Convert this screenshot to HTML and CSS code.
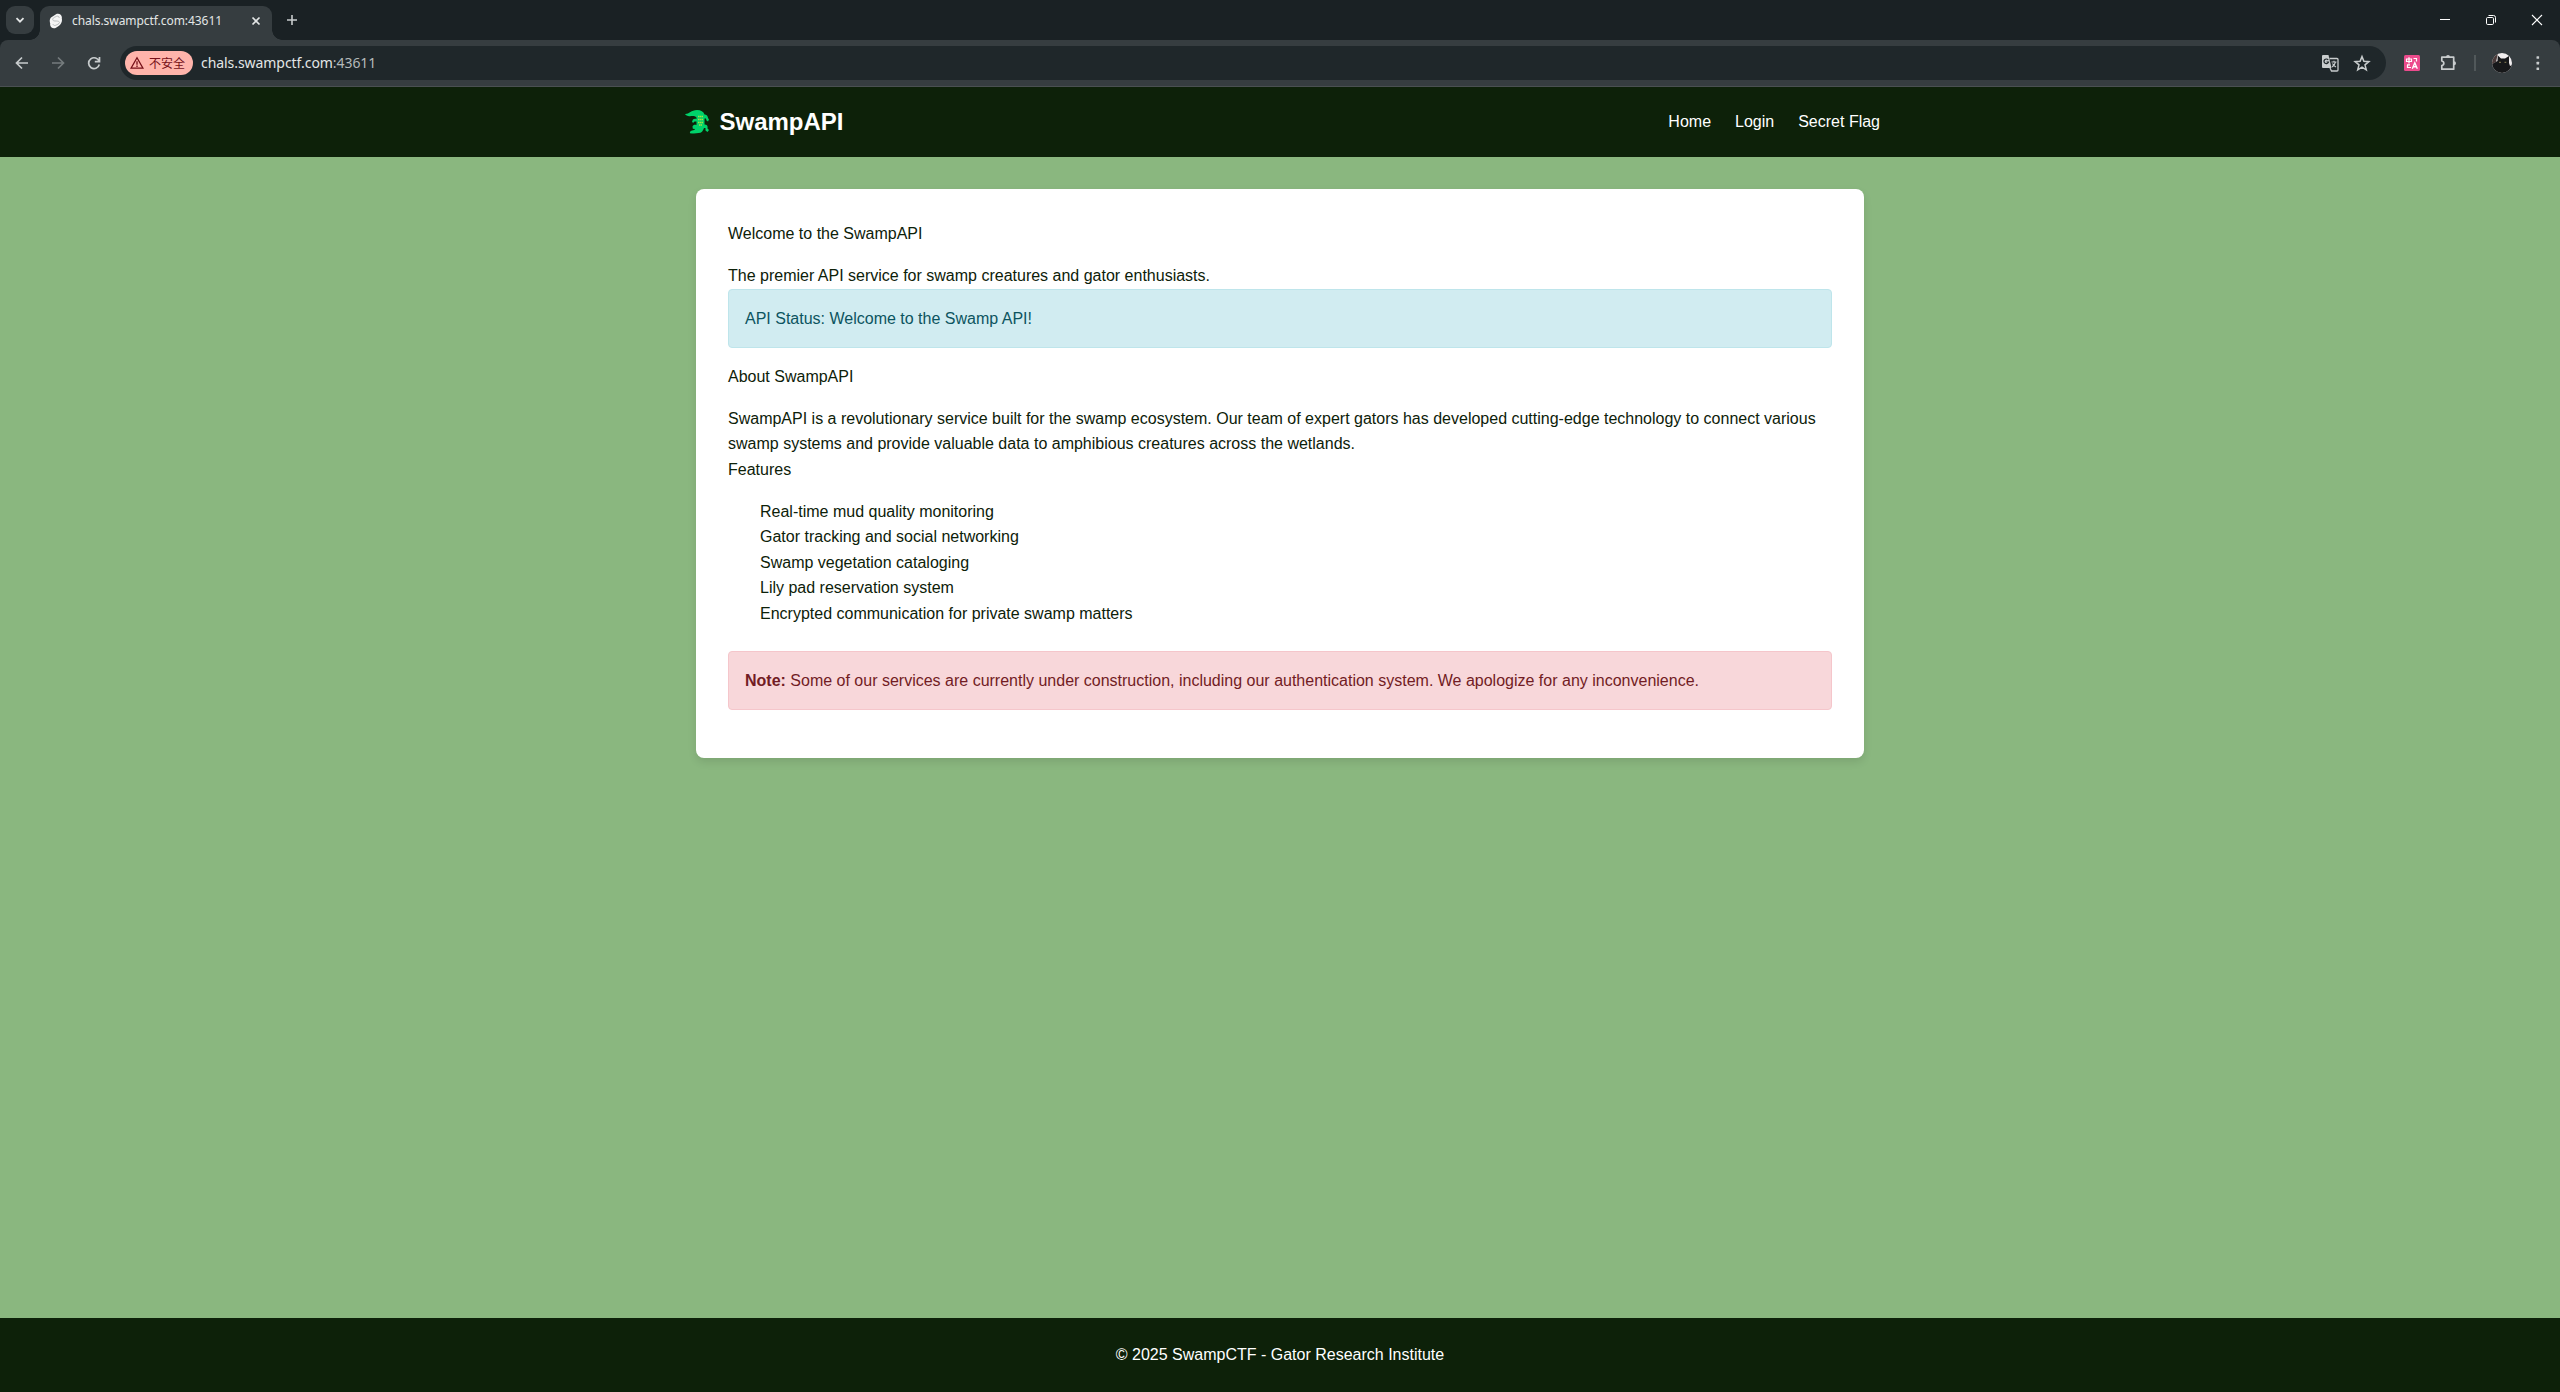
FILE: index.html
```html
<!DOCTYPE html>
<html lang="en">
<head>
<meta charset="utf-8">
<title>SwampAPI</title>
<link rel="stylesheet" href="styles.css">
</head>
<body>
<div class="browser">
  <div class="tabstrip">
    <div class="tab-search"><svg width="28" height="28" viewBox="0 0 28 28"><path d="M10.500 12.200l3.500 3.500 3.500-3.500" fill="none" stroke="#e3e6e6" stroke-width="1.800"/></svg></div>
    <div class="tab">
      <svg class="favicon" width="16" height="16" viewBox="0 0 16 16"><path d="M3 4.500L8 1.200C11 -.3 14.500 2 13.800 5.500C14.200 7 14 9 13 10.500C12.500 12 10 13.300 8 14.700C5 16.300 1.500 14 2.200 10.500C1.500 8.500 1.500 6.200 3 4.500Z" fill="#f5f5f5"/><path d="M5 7.200C4 5.500 5.500 4.800 8.500 3.300C10.500 2.600 11.500 4 11 5M5 11C5.500 13.400 8 12.600 11 10.500C12.500 8.500 10 8 8 8C6.500 8 5.300 8 5 7.200" fill="none" stroke="#b9bdbd" stroke-width="1"/></svg>
      <span class="tab-title">chals.swampctf.com:43611</span>
      <svg class="tab-close" width="16" height="16" viewBox="0 0 16 16"><path d="M4.500 4.500l7 7M11.500 4.500l-7 7" stroke="#e3e6e6" stroke-width="1.700"/></svg>
    </div>
    <svg class="new-tab" width="20" height="20" viewBox="0 0 20 20"><path d="M10 5v10M5 10h10" stroke="#c8cccd" stroke-width="1.600"/></svg>
    <div class="window-buttons">
      <svg width="46" height="40" viewBox="0 0 46 40"><path d="M18 19.500h10" stroke="#fff"/></svg>
      <svg width="46" height="40" viewBox="0 0 46 40"><rect x="18.500" y="17.500" width="7" height="7" rx="1.200" fill="none" stroke="#fff"/><path d="M20.500 15.500h5a2 2 0 0 1 2 2v5" fill="none" stroke="#fff"/></svg>
      <svg width="46" height="40" viewBox="0 0 46 40"><path d="M18 15l10 10M28 15l-10 10" stroke="#fff" stroke-width="1.100"/></svg>
    </div>
  </div>
  <div class="toolbar">
    <svg class="nav-icon" width="20" height="20" viewBox="0 0 20 20"><path d="M16 10H5M10 4.500L4.500 10l5.500 5.500" fill="none" stroke="#c8cccd" stroke-width="1.700"/></svg>
    <svg class="nav-icon" width="20" height="20" viewBox="0 0 20 20"><path d="M4 10h11M10 4.500L15.500 10 10 15.500" fill="none" stroke="#757b7d" stroke-width="1.700"/></svg>
    <svg class="nav-icon" width="20" height="20" viewBox="0 0 20 20"><path d="M15.200 8.500A5.400 5.400 0 1 0 15.300 11.500M15.500 4v4.700h-4.700" fill="none" stroke="#c8cccd" stroke-width="1.700"/></svg>
    <div class="omnibox">
      <div class="insecure"><svg width="14" height="14" viewBox="0 0 14 14"><path d="M7 1.800L13 12.200H1Z" fill="none" stroke="#750f18" stroke-width="1.300"/><path d="M7 5.200v3.500M7 9.600v1.300" stroke="#750f18" stroke-width="1.300"/></svg><span>不安全</span></div>
      <span class="url">chals.swampctf.com<span class="port">:43611</span></span>
      <svg class="translate" width="18" height="18" viewBox="0 0 18 18"><path d="M2 1h5.500l3 13H2a1 1 0 0 1-1-1V2a1 1 0 0 1 1-1Z" fill="#c8cccd"/><path d="M8.500 4.500H16a1 1 0 0 1 1 1V16a1 1 0 0 1-1 1h-5.500l-1.500-3" fill="none" stroke="#c8cccd" stroke-width="1.300"/><path d="M7.200 6A2.300 2.300 0 1 0 7.500 8H5.500" fill="none" stroke="#1f272a" stroke-width="1.200"/><path d="M10.500 8h5M13 6.800V8M14.500 8c-.5 2-1.500 3.500-3.500 5M11.500 9.500c.8 1.500 2 2.700 3.500 3.500" fill="none" stroke="#c8cccd" stroke-width="1.100"/></svg>
      <svg class="star" width="18" height="18" viewBox="0 0 18 18"><path d="M9 2.600l1.900 4.700 5 .4-3.900 3.200 1.300 5L9 13.200l-4.300 2.700 1.300-5-3.900-3.200 5-.4Z" fill="none" stroke="#c8cccd" stroke-width="1.500"/></svg>
    </div>
    <div class="actions">
      <svg width="16" height="16" viewBox="0 0 16 16"><rect width="16" height="16" rx="1.500" fill="#ec4b8c"/><path d="M2.500 4h5v2.500h-5ZM5 2.300v6.200M9.500 3.500H12.500V6.500M3.500 10v2.500h3.500M3 9.800h3" fill="none" stroke="#fff" stroke-width="1.200"/><path d="M8.300 13.700l2.500-6 2.500 6M9.300 11.800h3" fill="none" stroke="#fff" stroke-width="1.400"/></svg>
      <svg width="20" height="20" viewBox="0 0 20 20"><path d="M3.800 4.200H15.700V16.200H3.800V12.500C6.500 12 6.500 8.500 3.800 8Z" fill="none" stroke="#c8cccd" stroke-width="1.700" stroke-linejoin="round"/><path d="M8 4a2 2 0 0 1 4 0ZM16 8.300a2 2 0 0 1 0 4Z" fill="#c8cccd"/></svg>
      <span class="separator"></span>
      <svg width="20" height="20" viewBox="0 0 20 20"><defs><clipPath id="avatar"><circle cx="10" cy="10" r="10"/></clipPath></defs><g clip-path="url(#avatar)"><rect width="20" height="20" fill="#f1eeef"/><path d="M0 0h6L4 9 0 11Z" fill="#4b3b3a"/><path d="M0 11L5.500 8 5.800 2.500 9 5.500h4L17 3v7l1 3 2-1v8H0Z" fill="#17181a"/><path d="M7 9.300h2M12.500 9.300h1.800" stroke="#8b8058"/></g></svg>
      <svg width="20" height="20" viewBox="0 0 20 20"><g fill="#c8cccd"><rect x="8.500" y="3.200" width="2.600" height="2.600" rx=".5"/><rect x="8.500" y="8.800" width="2.600" height="2.600" rx=".5"/><rect x="8.500" y="14.400" width="2.600" height="2.600" rx=".5"/></g></svg>
    </div>
  </div>
</div>
<header class="site-header">
  <div class="header-inner">
    <a class="logo"><svg width="24" height="24" viewBox="0 0 24 24"><path d="M0 4C4 4.300 6 0 12 0C16 0 18.500 1.500 19.500 4.500C21.500 4.700 23 6 23 8L24 9.500L23 11.500L21.500 10.500L21 8.500L19.500 8.500V14.500C22 14.500 23 16 22.500 18.500L24 20L22.500 22L20.500 20.500L20.500 18L19 18C18 21 16.500 23 13.500 23C11 23.500 8 23.500 5 23.200C4.500 22 5.500 21 7 20.500C9 20.300 9.500 20 10 19L7.800 18.700L7.500 16.500C8 15 9.500 14.500 11.500 15V11.500L9.500 11.500L8 13L7 11.500L8 9.500C9 8.700 10 8.500 11.500 9V7.500C10 6 8 5.700 5 6.200C3 6.500 1 5.500 0 4Z" fill="#00d26a"/><path d="M13 6.500h5M13 9.500h5M13 12.500h5M14 15h3" stroke="#a5df42" stroke-width="1.400" stroke-dasharray="1.400 .4"/></svg><span>SwampAPI</span></a>
    <nav class="site-nav"><a>Home</a><a>Login</a><a>Secret Flag</a></nav>
  </div>
</header>
<main class="site-main">
  <section class="card">
    <h1>Welcome to the SwampAPI</h1>
    <p>The premier API service for swamp creatures and gator enthusiasts.</p>
    <div class="alert info">API Status: Welcome to the Swamp API!</div>
    <h2>About SwampAPI</h2>
    <p>SwampAPI is a revolutionary service built for the swamp ecosystem. Our team of expert gators has developed cutting-edge technology to connect various swamp systems and provide valuable data to amphibious creatures across the wetlands.</p>
    <h2>Features</h2>
    <ul>
      <li>Real-time mud quality monitoring</li>
      <li>Gator tracking and social networking</li>
      <li>Swamp vegetation cataloging</li>
      <li>Lily pad reservation system</li>
      <li>Encrypted communication for private swamp matters</li>
    </ul>
    <div class="alert danger"><strong>Note:</strong> Some of our services are currently under construction, including our authentication system. We apologize for any inconvenience.</div>
  </section>
</main>
<footer class="site-footer">© 2025 SwampCTF - Gator Research Institute</footer>
</body>
</html>
```
FILE: styles.css
```css
* { box-sizing: border-box; margin: 0; padding: 0; }
body {
  display: flex;
  flex-direction: column;
  height: 100vh;
  overflow: hidden;
  background: #8ab77f;
  color: #0d2109;
  font: 16px/1.6 "Liberation Sans", Arial, sans-serif;
}
svg { display: block; flex: none; }

.browser {
  flex: none;
  height: 87px;
  background: #1a2124;
  color: #e3e6e6;
  font-family: "Noto Sans", "Noto Sans CJK SC", sans-serif;
}
.tabstrip { display: flex; height: 40px; }
.tab-search { width: 28px; height: 28px; margin: 6px 6px 0; background: #363d40; border-radius: 9px; }
.tab {
  position: relative;
  display: flex;
  align-items: center;
  width: 232px;
  height: 34px;
  margin-top: 6px;
  padding: 0 8px 5px;
  background: #363d40;
  border-radius: 9px 9px 0 0;
}
.tab::before, .tab::after {
  content: "";
  position: absolute;
  bottom: 0;
  width: 10px;
  height: 10px;
}
.tab::before { left: -10px; background: radial-gradient(circle at 0 0, transparent 9.5px, #363d40 10px); }
.tab::after { right: -10px; background: radial-gradient(circle at 100% 0, transparent 9.5px, #363d40 10px); }
.tab-title { margin-left: 8px; font-size: 12px; line-height: 16px; letter-spacing: -.06px; white-space: nowrap; }
.tab-close { margin-left: auto; }
.new-tab { margin: 10px 0 0 10px; }
.window-buttons { display: flex; margin-left: auto; }

.toolbar {
  display: flex;
  align-items: center;
  height: 47px;
  padding: 0 12px 1px;
  background: #363d40;
  border-bottom: 1px solid #4a5052;
  border-radius: 8px 8px 0 0;
}
.nav-icon { margin-right: 16px; }
.omnibox {
  display: flex;
  align-items: center;
  flex: 1;
  height: 34px;
  padding: 0 15px 0 5px;
  background: #1f272a;
  border-radius: 17px;
}
.insecure {
  display: flex;
  align-items: center;
  gap: 5px;
  width: 68px;
  height: 24px;
  padding-left: 5px;
  background: #ffb4ab;
  border-radius: 12px;
  color: #750f18;
  font: 12px/24px "Noto Sans CJK SC", sans-serif;
}
.url { margin-left: 8px; font-size: 14px; line-height: 20px; letter-spacing: -.06px; white-space: nowrap; }
.port { color: #b4b9ba; }
.translate { margin-left: auto; }
.star { margin-left: 14px; }
.actions { display: flex; align-items: center; margin-left: 18px; }
.actions > :nth-child(2) { margin-left: 18px; }
.separator { width: 2px; height: 16px; margin: 0 16px; background: #51585a; }
.actions > :nth-child(5) { margin-left: 16px; }

.site-header { flex: none; padding: 16px 0; background: #0d2109; }
.header-inner { display: flex; align-items: center; justify-content: space-between; width: 1200px; margin: 0 auto; color: #fff; }
.logo { display: flex; align-items: center; gap: 10.5px; padding-left: 5px; font-size: 24px; font-weight: bold; line-height: 38.4px; }
.site-nav { display: flex; gap: 24px; }

.site-main { flex: 1; width: 1200px; margin: 0 auto; padding: 32px 16px; }
.card { padding: 32px; background: #fff; border-radius: 8px; box-shadow: 0 4px 8px rgba(0, 0, 0, .1); }
h1, h2 { margin-bottom: 16px; font-size: 16px; font-weight: normal; }
ul { margin-bottom: 24px; padding-left: 32px; list-style: none; }
.alert { margin-bottom: 16px; padding: 16px; border: 1px solid; border-radius: 4px; }
.info { background: #d1ecf1; border-color: #bee5eb; color: #0c5460; }
.danger { background: #f8d7da; border-color: #f5c6cb; color: #721c24; }

.site-footer { flex: none; padding: 24px; background: #0d2109; color: #fff; text-align: center; }
```
